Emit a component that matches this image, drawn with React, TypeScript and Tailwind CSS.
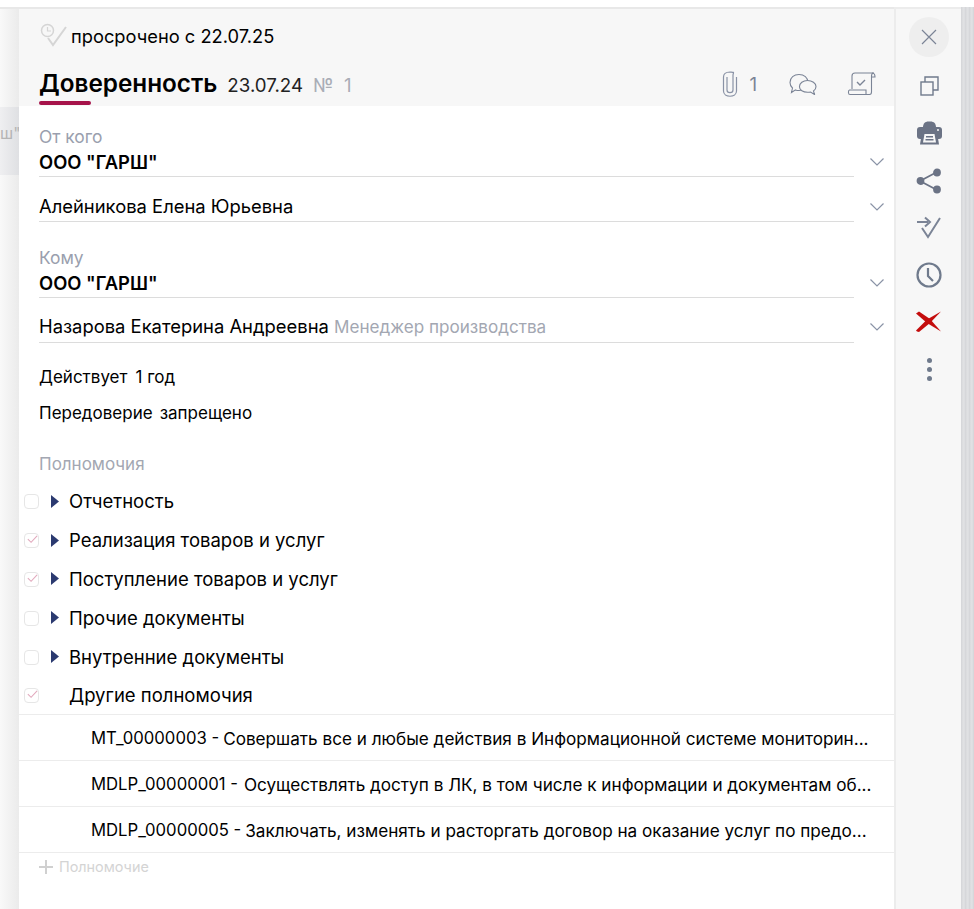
const Chevron = () => (
  <svg width="16" height="10" viewBox="0 0 16 10" fill="none" stroke="#8a93a6" strokeWidth="1.2" className="shrink-0">
    <path d="M1.500 1.500 8 8l6.500-6.500" />
  </svg>
);

const Field = ({
  label,
  children,
  className,
}: {
  label?: string;
  children: React.ReactNode;
  className?: string;
}) => (
  <div className={"flex items-start " + (className || "")}>
    <div className="w-[815px] shrink-0 border-b border-[#dcdcdc]">
      {label && <div className="text-[17.4px] leading-[20px] pt-px pb-[3px] text-[#9a9fae]">{label}</div>}
      <div className={"text-[18.4px] leading-[24px] text-black whitespace-nowrap " + (label ? "pb-[2px]" : "pb-[3px]")}>
        {children}
      </div>
    </div>
    <div className={"ml-[15px] " + (label ? "mt-[31px]" : "mt-[8px]")}>
      <Chevron />
    </div>
  </div>
);

const CheckBox = ({ checked }: { checked?: boolean }) => (
  <div className="w-[15px] h-[15px] rounded-[4px] border border-[#e6e6e6] bg-white flex items-center justify-center shrink-0 mt-[1px]">
    {checked && (
      <svg width="13" height="11" viewBox="0 0 13 11" fill="none" stroke="#e2a9bd" strokeWidth="1.2" className="-mt-[2px] ml-[1px]">
        <path d="M2 5l3.500 3.500L12 1.500" />
      </svg>
    )}
  </div>
);

const Perm = ({ text, checked, arrow = true }: { text: string; checked?: boolean; arrow?: boolean }) => (
  <div className="flex items-center h-[38.8px] pl-[5px]">
    <CheckBox checked={checked} />
    <div className="w-[30px] flex justify-center">
      {arrow && (
        <svg width="9" height="13" viewBox="0 0 9 13" fill="#2b3a70">
          <path d="M1 0l8 6.500L1 13z" />
        </svg>
      )}
    </div>
    <span className="text-[18.5px] text-black leading-[24px]">{text}</span>
  </div>
);

const Item = ({ code, text, gap }: { code: string; text: string; gap?: string }) => (
  <div className="h-[46px] border-b border-[#ececec] pl-[72px] pt-[3px] flex items-center text-[16.7px] text-black whitespace-nowrap">
    <span className={gap}>{code} - </span>
    <span className="text-[17.15px] ml-[4px]">{text}</span>
  </div>
);

const RailIcon = ({ children }: { children: React.ReactNode }) => (
  <div className="h-[47px] flex items-center justify-center">{children}</div>
);

export default function App() {
  return (
    <div className="w-[974px] h-[909px] overflow-hidden bg-white pt-[7px] flex font-['Inter',sans-serif]">
      {/* dimmed list behind the card */}
      <div className="w-[19px] h-full flex flex-col border-t-2 border-[#e8e8e8] bg-gradient-to-r from-[#f9f9f9] to-[#ebebeb] overflow-hidden">
        <div className="h-[98px] shrink-0" />
        <div className="h-[68px] shrink-0 bg-gradient-to-r from-[#efeff1] to-[#dfe0e3] text-[#b5b5b5] text-[16px] leading-[24px] pt-[14px] whitespace-nowrap">
          ш"
        </div>
      </div>

      <div className="w-[875px] h-full flex flex-col border-t-2 border-[#e8e8e8] bg-white">
        <div className="h-[97px] bg-[#f7f7f7] px-[20px] relative shrink-0">
          <div className="flex items-center h-[24px] mt-[16px]">
            <svg width="28" height="24" viewBox="0 0 28 24" fill="none" className="shrink-0 -mt-[4px]">
              <circle cx="8.500" cy="7.500" r="6" stroke="#d5d5d5" strokeWidth="1.500" />
              <path d="M8.500 4v4h3.500" stroke="#d5d5d5" strokeWidth="1.200" />
              <path d="M9 15l5 7L27 4" stroke="#d5d5d5" strokeWidth="2" />
            </svg>
            <span className="ml-[4px] text-[18.300px] text-black">просрочено с 22.07.25</span>
          </div>
          <div className="flex items-center mt-[18px] h-[32px]">
            <div className="flex items-baseline">
              <div className="relative">
                <span className="text-[24.300px] font-semibold text-black">Доверенность</span>
                <div className="absolute left-0 top-[36px] w-[52px] h-[4px] rounded-full bg-[#a6134a]" />
              </div>
              <span className="ml-[10px] text-[18.700px] text-[#222]">23.07.24</span>
              <span className="ml-[10px] text-[18.700px] text-[#a9adb6]">№&nbsp;&nbsp;1</span>
            </div>
            <div className="ml-auto flex items-center mt-px mr-[-3px]">
              <svg width="16" height="26" viewBox="0 0 16 26" fill="none" stroke="#8a93a6" strokeWidth="1.200">
                <path d="M5 6v13c0 3.500 6 3.500 6 0V4.500C11 1 13.500 1.500 8 1 3.500 1 1.500 3 1.500 6v14c0 7 13 7 13 0V6" />
              </svg>
              <span className="ml-[11px] text-[18.700px] text-[#7b8496] mt-[3px]">1</span>
              <svg width="28" height="22" viewBox="0 0 28 22" stroke="#7b8496" strokeWidth="1.100" className="ml-[32px]" fill="#f7f7f7">
                <path d="M1 9.500C1 4.500 5 1.500 10 1.500s9 3 9 8-4 8-9 8c-1.500 0-2.500-.2-3.500-.6L2.500 19.500l1-4.500C1.800 13.500 1 11.500 1 9.500z" />
                <path d="M10.500 13.500c0-3.500 3.500-6 8-6s8.500 2.500 8.500 6c0 2-1 3.500-2.500 4.500l1 3.500-4-2.500c-.8.200-1.800.300-3 .300-4.500 0-8-2.300-8-5.300z" />
              </svg>
              <svg width="30" height="24" viewBox="0 0 30 24" fill="none" stroke="#7b8496" strokeWidth="1.100" className="ml-[30px]">
                <path d="M5 17V4c0-2 1-3 3-3h19c-1.500 0-2.500 1-2.500 3v16c0 1.500-1 2.500-2 2.500H3c-2 0-2-4-.5-4.500H19v4.500" />
                <path d="M25 1c2 0 3 1 3 4h-3.500" />
                <path d="M10 10l3 3 5-5" strokeWidth="1.400" />
              </svg>
            </div>
          </div>
        </div>

        <div className="flex-1 pt-[20px] flex flex-col">
          <div className="px-[20px]">
            <Field label="От кого"><b className="font-semibold">ООО "ГАРШ"</b></Field>
            <Field className="mt-[17px]">Алейникова Елена Юрьевна</Field>
            <Field label="Кому" className="mt-[25px]"><b className="font-semibold">ООО "ГАРШ"</b></Field>
            <Field className="mt-[16px]">
              Назарова Екатерина Андреевна <span className="text-[#a3a7b2] text-[17.100px]">Менеджер производства</span>
            </Field>
            <div className="mt-[22px] text-[17px] leading-[24px] text-black">
              Действует<span className="ml-[8px]">1 год</span>
            </div>
            <div className="mt-[12px] text-[17px] leading-[24px] text-black">
              Передоверие<span className="ml-[7px]">запрещено</span>
            </div>
            <div className="mt-[27px] text-[17px] leading-[24px] text-[#a3a7b2]">Полномочия</div>
          </div>
          <div className="mt-[6px]">
            <Perm text="Отчетность" />
            <Perm text="Реализация товаров и услуг" checked />
            <Perm text="Поступление товаров и услуг" checked />
            <Perm text="Прочие документы" />
            <Perm text="Внутренние документы" />
            <Perm text="Другие полномочия" checked arrow={false} />
          </div>
          <div className="border-t border-[#ececec] -mt-px">
            <Item code="MT_00000003" text="Совершать все и любые действия в Информационной системе мониторин..." />
            <Item code="MDLP_00000001" gap="mr-[2px]" text="Осуществлять доступ в ЛК, в том числе к информации и документам об..." />
            <Item code="MDLP_00000005" text="Заключать, изменять и расторгать договор на оказание услуг по предо..." />
          </div>
          <div className="px-[20px] flex items-center h-[28px] text-[#d4d4d4] text-[14.400px]">
            <svg width="14" height="14" viewBox="0 0 14 14" fill="#d0d0d0" className="mr-[6px]">
              <path d="M6 0h2v6h6v2H8v6H6V8H0V6h6z" />
            </svg>
            Полномочие
          </div>
        </div>
      </div>

      <div className="w-[67px] h-full border-t-2 border-l-2 border-[#ececec] bg-[#f7f7f7] flex flex-col items-center pt-[8px] pl-px">
        <div className="w-[40px] h-[40px] rounded-full bg-[#eeeeee] flex items-center justify-center">
          <svg width="16" height="16" viewBox="0 0 16 16" stroke="#7b8496" strokeWidth="1.200" fill="none">
            <path d="M1 1l14 14M15 1 1 15" />
          </svg>
        </div>
        <div className="mt-[5px] w-full">
          <RailIcon>
            <svg width="19" height="20" viewBox="0 0 19 20" fill="none" stroke="#6f7a8c" strokeWidth="1.400">
              <path d="M5 6V1h13v13h-5" />
              <rect x="1" y="6" width="12" height="13" />
            </svg>
          </RailIcon>
          <RailIcon>
            <svg width="25" height="24" viewBox="0 0 25 24" fill="#6b7385">
              <path d="M6 6.500C6 2.500 8 .5 11.500.5h2c3.500 0 5.500 2 5.500 6z" />
              <rect x="0" y="6" width="25" height="12" rx="3" />
              <path d="M5 11h15l2 12.500H3z" />
              <path d="M7.500 13h10l1.500 8.500H6z" fill="#f7f7f7" />
              <path d="M9 15h7v1.500H9zM8.500 18h8v1.500h-8z" />
              <circle cx="21" cy="9" r="1" fill="#f7f7f7" />
            </svg>
          </RailIcon>
          <div className="h-[47px] flex items-center justify-center mt-px">
            <svg width="26" height="26" viewBox="0 0 26 26" fill="#6b7385" stroke="#6b7385" strokeWidth="1.800">
              <path d="M4 13 21 4M4 13l17 9" fill="none" />
              <circle cx="4.500" cy="13" r="3" />
              <circle cx="21" cy="4.500" r="3" />
              <circle cx="21" cy="21.500" r="3" />
            </svg>
          </div>
          <RailIcon>
            <svg width="26" height="24" viewBox="0 0 26 24" fill="none" stroke="#7b8496" strokeWidth="2">
              <path d="M1 6h11M9 1.500 14 6l-5 4.500" />
              <path d="M6 12l6 9L24 2" />
            </svg>
          </RailIcon>
          <RailIcon>
            <svg width="26" height="26" viewBox="0 0 26 26" fill="none" stroke="#6f7a8c" strokeWidth="2.200">
              <circle cx="13" cy="13" r="11.500" />
              <path d="M12 6v8l5 5" />
            </svg>
          </RailIcon>
          <RailIcon>
            <svg width="26" height="22" viewBox="0 0 26 22" fill="#c40d0d">
              <path d="M0 2.500 3 .5 14 8 25 20.500 11 12z" />
              <path d="M0 19.500 1 20.500 3 21 14 12 25 .5 11 8.500z" />
            </svg>
          </RailIcon>
          <div className="h-[47px] flex items-center justify-center mt-px">
            <div className="flex flex-col gap-[4px]">
              <div className="w-[5px] h-[5px] rounded-full bg-[#6f7a8c]" />
              <div className="w-[5px] h-[5px] rounded-full bg-[#6f7a8c]" />
              <div className="w-[5px] h-[5px] rounded-full bg-[#6f7a8c]" />
            </div>
          </div>
        </div>
      </div>
      <div className="w-[13px] h-full bg-[#dcdde0] bg-[repeating-linear-gradient(90deg,#d6d7da_0px,#d6d7da_1px,#e1e2e4_2px,#dcdde0_4px)]" />
    </div>
  );
}
